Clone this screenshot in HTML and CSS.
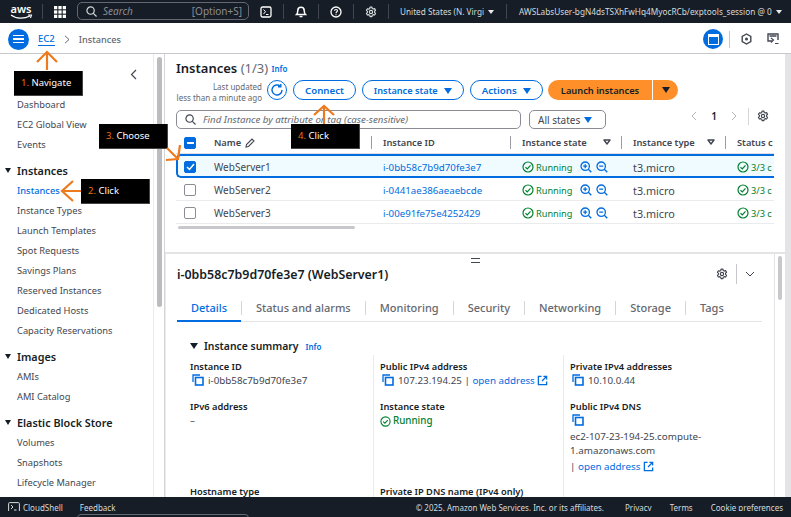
FILE: index.html
```html
<!DOCTYPE html>
<html lang="en">
  <head>
    <meta charset="UTF-8" />
    <title>Instances | EC2</title>
    <link rel="stylesheet" href="styles.css">
  </head>
  <body>
    <svg class="defs" width="0" height="0">
      <symbol id="gear" viewBox="0 0 16 16"><path d="M6.7 1.500h2.600l.4 1.900 1.300.7 1.800-.6 1.300 2.200-1.400 1.300v1.600l1.400 1.300-1.300 2.200-1.800-.6-1.300.7-.4 1.900H6.700l-.4-1.900-1.300-.7-1.800.6-1.300-2.200 1.400-1.300V7.100L1.900 5.800l1.300-2.200 1.800.6 1.300-.7z" fill="none" stroke="currentColor" stroke-width="1.500" stroke-linejoin="round"/><circle cx="8" cy="8" r="2.200" fill="none" stroke="currentColor" stroke-width="1.500"/></symbol>
      <symbol id="copy" viewBox="0 0 12 12"><path d="M1 8V1h7" fill="none" stroke="currentColor" stroke-width="1.300"/><rect x="3.500" y="3.500" width="7.500" height="7.500" fill="none" stroke="currentColor" stroke-width="1.600"/></symbol>
      <symbol id="ok" viewBox="0 0 12 12"><circle cx="6" cy="6" r="5" fill="none" stroke="currentColor" stroke-width="1.200"/><path d="M3.500 6.200l1.800 1.700 3.200-3.500" fill="none" stroke="currentColor" stroke-width="1.200"/></symbol>
      <symbol id="plus" viewBox="0 0 12 12"><circle cx="5.200" cy="5.200" r="4.200" fill="none" stroke="currentColor" stroke-width="1.300"/><path d="M8.300 8.300L11.300 11.300M3.200 5.200h4M5.200 3.200v4" fill="none" stroke="currentColor" stroke-width="1.300"/></symbol>
      <symbol id="minus" viewBox="0 0 12 12"><circle cx="5.200" cy="5.200" r="4.200" fill="none" stroke="currentColor" stroke-width="1.300"/><path d="M8.300 8.300L11.300 11.300M3.200 5.200h4" fill="none" stroke="currentColor" stroke-width="1.300"/></symbol>
      <symbol id="ext" viewBox="0 0 12 12"><path d="M5 1.500H1.500v9h9V7M7 1.500h3.500V5M10.300 1.700L5.500 6.500" fill="none" stroke="currentColor" stroke-width="1.400"/></symbol>
      <symbol id="sort" viewBox="0 0 8 6"><path d="M1 1h6L4 5z" fill="none" stroke="currentColor" stroke-width="1.400" stroke-linejoin="round"/></symbol>
    </svg>

    <header class="topnav">
      <div class="aws-logo">
        <span class="aws-word">aws</span>
        <svg width="23" height="6" viewBox="0 0 23 6"><path d="M1 1c5 4 13 4 19 1M18 1h3.500l-1 3" fill="none" stroke="#fff" stroke-width="1.100"/></svg>
      </div>
      <span class="nav-sep first"></span>
      <svg class="apps" width="12" height="12" viewBox="0 0 11 11" fill="#fff"><rect width="3" height="3"/><rect x="4" width="3" height="3"/><rect x="8" width="3" height="3"/><rect y="4" width="3" height="3"/><rect x="4" y="4" width="3" height="3"/><rect x="8" y="4" width="3" height="3"/><rect y="8" width="3" height="3"/><rect x="4" y="8" width="3" height="3"/><rect x="8" y="8" width="3" height="3"/></svg>
      <div class="nav-search">
        <svg width="11" height="11" viewBox="0 0 12 12"><circle cx="5" cy="5" r="4" fill="none" stroke="#d5dbdb" stroke-width="1.300"/><path d="M8 8l3.500 3.500" stroke="#d5dbdb" stroke-width="1.300"/></svg>
        <span class="search-word">Search</span>
        <span class="search-key">[Option+S]</span>
      </div>
      <svg class="nav-icon shell" width="12" height="12" viewBox="0 0 12 12"><rect x="1" y="1" width="10" height="10" rx="1.500" fill="none" stroke="#fff" stroke-width="1.300"/><path d="M3.500 3.500L5.500 5.700 3.500 8M6 8.500h2.500" fill="none" stroke="#fff" stroke-width="1"/></svg>
      <span class="nav-sep"></span>
      <svg class="nav-icon" width="12" height="13" viewBox="0 0 12 13"><path d="M1.500 9.500c1-1 1.300-2 1.300-4a3.200 3.200 0 0 1 6.400 0c0 2 .3 3 1.300 4z" fill="none" stroke="#fff" stroke-width="1.500"/><path d="M4.500 11.500h3" stroke="#fff" stroke-width="1.500"/></svg>
      <span class="nav-sep"></span>
      <svg class="nav-icon" width="12" height="12" viewBox="0 0 12 12"><circle cx="6" cy="6" r="5" fill="none" stroke="#fff" stroke-width="1.300"/><path d="M4.500 4.700C4.500 3 7.500 3 7.500 4.700 7.500 5.800 6 5.800 6 7.200M6 8.200v1" fill="none" stroke="#fff" stroke-width="1.100"/></svg>
      <span class="nav-sep"></span>
      <svg class="nav-icon gear-top" width="12" height="12"><use href="#gear"/></svg>
      <span class="nav-sep"></span>
      <span class="nav-region">United States (N. Virgi</span>
      <span class="caret white region-caret"></span>
      <span class="nav-sep region-sep"></span>
      <span class="nav-user">AWSLabsUser-bgN4dsTSXhFwHq4MyocRCb/exptools_session @ 0</span>
      <span class="caret white"></span>
    </header>

    <div class="crumbs">
      <button class="menu-btn" type="button"><span></span><span></span><span></span></button>
      <a class="crumb-link">EC2</a>
      <svg width="6" height="9" viewBox="0 0 6 9"><path d="M1 .8L5 4.500 1 8.200" fill="none" stroke="#656871" stroke-width="1"/></svg>
      <span class="crumb-here">Instances</span>
      <div class="crumb-tools">
        <span class="panel-btn"><span></span></span>
        <span class="tool-sep"></span>
        <svg class="hex" width="11" height="12" viewBox="0 0 11 12"><path d="M5.500 1l4.300 2.500v5L5.500 11 1.200 8.500v-5z" fill="none" stroke="#424650" stroke-width="1.400"/><circle cx="5.500" cy="6" r="1.500" fill="#424650"/></svg>
        <svg class="cast" width="12" height="12" viewBox="0 0 12 12"><path d="M5 8H1V1h10v6" fill="none" stroke="#424650" stroke-width="1.400"/><path d="M2.500 3h7" stroke="#424650" stroke-width="1.500"/><path d="M4 5l2.500 2L4 9.500M8 10.500h3.500" fill="none" stroke="#424650" stroke-width="1.200"/></svg>
      </div>
    </div>

    <div class="content">
      <nav class="sidebar">
        <div class="side-close"><svg width="7" height="11" viewBox="0 0 7 11"><path d="M6 1L1.500 5.500 6 10" fill="none" stroke="#424650" stroke-width="1.200"/></svg></div>
        <a class="side-item">Dashboard</a>
        <a class="side-item">EC2 Global View</a>
        <a class="side-item">Events</a>
        <h3 class="side-head">Instances</h3>
        <a class="side-item active">Instances</a>
        <a class="side-item">Instance Types</a>
        <a class="side-item">Launch Templates</a>
        <a class="side-item">Spot Requests</a>
        <a class="side-item">Savings Plans</a>
        <a class="side-item">Reserved Instances</a>
        <a class="side-item">Dedicated Hosts</a>
        <a class="side-item">Capacity Reservations</a>
        <h3 class="side-head">Images</h3>
        <a class="side-item">AMIs</a>
        <a class="side-item">AMI Catalog</a>
        <h3 class="side-head">Elastic Block Store</h3>
        <a class="side-item">Volumes</a>
        <a class="side-item">Snapshots</a>
        <a class="side-item">Lifecycle Manager</a>
      </nav>
      <div class="side-scroll"><span></span></div>

      <main class="main">
        <section class="list-panel">
          <div class="list-top">
            <div class="list-title">
              <h1>Instances <span class="count">(1/3)</span> <a class="info">Info</a></h1>
              <div class="updated">Last updated<br />less than a minute ago</div>
            </div>
            <button class="refresh" type="button">
              <svg width="14" height="14" viewBox="0 0 14 14"><path d="M12 7a5 5 0 1 1-1.700-3.800" fill="none" stroke="#006ce0" stroke-width="1.400"/><path d="M10.800 1v2.800H8" fill="none" stroke="#006ce0" stroke-width="1.400"/></svg>
            </button>
            <button class="pill connect" type="button">Connect</button>
            <button class="pill state" type="button">Instance state <span class="caret blue"></span></button>
            <button class="pill actions" type="button">Actions <span class="caret blue"></span></button>
            <div class="launch">
              <span class="launch-main">Launch instances</span>
              <span class="launch-drop"><span class="caret dark"></span></span>
            </div>
          </div>

          <div class="filter-row">
            <div class="filter-box">
              <svg width="11" height="11" viewBox="0 0 12 12"><circle cx="5" cy="5" r="4" fill="none" stroke="#424650" stroke-width="1.300"/><path d="M8 8l3.500 3.500" stroke="#424650" stroke-width="1.300"/></svg>
              <span>Find Instance by attribute or tag (case-sensitive)</span>
            </div>
            <div class="state-select">All states <span class="caret blue"></span></div>
            <div class="pager">
              <svg width="6" height="10" viewBox="0 0 6 10"><path d="M5 1L1 5l4 4" fill="none" stroke="#b4b4bb" stroke-width="1"/></svg>
              <span class="page-num">1</span>
              <svg width="6" height="10" viewBox="0 0 6 10"><path d="M1 1l4 4-4 4" fill="none" stroke="#b4b4bb" stroke-width="1"/></svg>
              <span class="pager-sep"></span>
              <svg class="pager-gear" width="12" height="12"><use href="#gear"/></svg>
            </div>
          </div>

          <div class="table">
            <div class="row head">
              <span class="cell-check"><span class="check on"><span class="dash"></span></span></span>
              <span class="cell name">Name
                <svg width="10" height="10" viewBox="0 0 10 10"><path d="M1 9l.5-2.500L7 1l2 2-5.500 5.500z" fill="none" stroke="#424650" stroke-width="1.100"/></svg>
              </span>
              <span class="cell id"><i class="col-sep"></i>Instance ID</span>
              <span class="cell st"><i class="col-sep"></i>Instance state<svg class="sort" width="8" height="6"><use href="#sort"/></svg></span>
              <span class="cell ty"><i class="col-sep"></i>Instance type<svg class="sort" width="8" height="6"><use href="#sort"/></svg></span>
              <span class="cell ck"><i class="col-sep"></i>Status c</span>
            </div>
            <div class="row selected">
              <span class="cell-check"><span class="check on"><svg width="9" height="8" viewBox="0 0 9 8"><path d="M1 4l2.500 2.500L8 1" fill="none" stroke="#fff" stroke-width="1.500"/></svg></span></span>
              <span class="cell name">WebServer1</span>
              <a class="cell id">i-0bb58c7b9d70fe3e7</a>
              <span class="cell st"><span class="running"><svg width="12" height="12"><use href="#ok"/></svg>Running</span><svg class="zoom" width="12" height="12"><use href="#plus"/></svg><svg class="zoom" width="12" height="12"><use href="#minus"/></svg></span>
              <span class="cell ty">t3.micro</span>
              <span class="cell ck"><span class="running"><svg width="12" height="12"><use href="#ok"/></svg>3/3 c</span></span>
            </div>
            <div class="row">
              <span class="cell-check"><span class="check"></span></span>
              <span class="cell name">WebServer2</span>
              <a class="cell id">i-0441ae386aeaebcde</a>
              <span class="cell st"><span class="running"><svg width="12" height="12"><use href="#ok"/></svg>Running</span><svg class="zoom" width="12" height="12"><use href="#plus"/></svg><svg class="zoom" width="12" height="12"><use href="#minus"/></svg></span>
              <span class="cell ty">t3.micro</span>
              <span class="cell ck"><span class="running"><svg width="12" height="12"><use href="#ok"/></svg>3/3 c</span></span>
            </div>
            <div class="row">
              <span class="cell-check"><span class="check"></span></span>
              <span class="cell name">WebServer3</span>
              <a class="cell id">i-00e91fe75e4252429</a>
              <span class="cell st"><span class="running"><svg width="12" height="12"><use href="#ok"/></svg>Running</span><svg class="zoom" width="12" height="12"><use href="#plus"/></svg><svg class="zoom" width="12" height="12"><use href="#minus"/></svg></span>
              <span class="cell ty">t3.micro</span>
              <span class="cell ck"><span class="running"><svg width="12" height="12"><use href="#ok"/></svg>3/3 c</span></span>
            </div>
          </div>
          <div class="h-scroll"><span></span></div>
        </section>

        <section class="detail-panel">
          <div class="detail-body">
            <div class="drag-handle"></div>
            <div class="detail-head">
              <h2>i-0bb58c7b9d70fe3e7 (WebServer1)</h2>
              <svg class="detail-gear" width="12" height="12"><use href="#gear"/></svg>
              <span class="tool-sep short"></span>
              <svg width="10" height="6" viewBox="0 0 10 6"><path d="M1 1l4 4 4-4" fill="none" stroke="#424650" stroke-width="1"/></svg>
            </div>
            <div class="tabs">
              <a class="tab active">Details</a>
              <a class="tab">Status and alarms</a>
              <a class="tab">Monitoring</a>
              <a class="tab">Security</a>
              <a class="tab">Networking</a>
              <a class="tab">Storage</a>
              <a class="tab">Tags</a>
            </div>
            <h4 class="summary"><span class="caret dark"></span>Instance summary <a class="info">Info</a></h4>
            <div class="fields">
              <div class="field top">
                <b>Instance ID</b>
                <p><svg class="copy" width="12" height="12"><use href="#copy"/></svg>i-0bb58c7b9d70fe3e7</p>
              </div>
              <div class="field top ruled">
                <b>Public IPv4 address</b>
                <p><svg class="copy" width="12" height="12"><use href="#copy"/></svg>107.23.194.25 | <a>open address <svg width="11" height="11"><use href="#ext"/></svg></a></p>
              </div>
              <div class="field top ruled">
                <b>Private IPv4 addresses</b>
                <p><svg class="copy" width="12" height="12"><use href="#copy"/></svg>10.10.0.44</p>
              </div>
              <div class="field">
                <b>IPv6 address</b>
                <p>–</p>
              </div>
              <div class="field ruled">
                <b>Instance state</b>
                <p class="running"><svg width="11" height="11"><use href="#ok"/></svg>Running</p>
              </div>
              <div class="field ruled">
                <b>Public IPv4 DNS</b>
                <p><svg class="copy" width="12" height="12"><use href="#copy"/></svg></p>
                <p class="dns">ec2-107-23-194-25.compute-<br />1.amazonaws.com</p>
                <p class="dns-link">| <a>open address <svg width="11" height="11"><use href="#ext"/></svg></a></p>
              </div>
              <div class="field">
                <b>Hostname type</b>
              </div>
              <div class="field ruled">
                <b>Private IP DNS name (IPv4 only)</b>
              </div>
              <div class="field ruled"></div>
            </div>
          </div>
          <div class="detail-scroll"><span></span></div>
        </section>
      </main>
      <div class="main-scroll"></div>
    </div>

    <footer class="footer">
      <div class="foot-line">
        <svg width="12" height="11" viewBox="0 0 12 11"><rect x=".6" y=".6" width="10.800" height="9.800" rx="1" fill="none" stroke="#d5dbdb"/><path d="M3 3l2 2-2 2M6 8h2.500" fill="none" stroke="#d5dbdb"/></svg>
        <span class="foot-shell">CloudShell</span>
        <span class="foot-feedback">Feedback</span>
        <span class="foot-copy">© 2025, Amazon Web Services, Inc. or its affiliates.</span>
        <span class="foot-link">Privacy</span>
        <span class="foot-link">Terms</span>
        <span class="foot-link">Cookie preferences</span>
      </div>
      <div class="foot-edge"><span></span></div>
    </footer>

    <!-- tutorial callouts drawn over the console -->
    <div class="callout c1"><em>1.</em> Navigate</div>
    <div class="callout c2"><em>2.</em> Click</div>
    <div class="callout c3"><em>3.</em> Choose</div>
    <div class="callout c4"><em>4.</em> Click</div>
    <svg class="arrows" width="791" height="517" viewBox="0 0 791 517">
      <g fill="none" stroke="#ee7a1e" stroke-width="2.200">
        <path d="M47 70V53M37 62l10-10 10 10" />
        <path d="M81 191H63M73 181l-11 10 11 10" />
        <path d="M324 124V107M314 115l10-9 10 9" />
        <path d="M167 148l11 11M180 145l-2 14-12 1" />
      </g>
    </svg>
  </body>
</html>
```

FILE: styles.css
```css
* {
  box-sizing: border-box;
}
html,
body {
  margin: 0;
  height: 100%;
}
body {
  position: relative;
  width: 791px;
  height: 517px;
  overflow: hidden;
  display: flex;
  flex-direction: column;
  background: #fff;
  color: #424650;
  font-family: "Noto Sans", "Open Sans", sans-serif;
  font-size: 10px;
}
a {
  color: #006ce0;
}
h1,
h2,
h3,
h4,
p {
  margin: 0;
}
button {
  font-family: inherit;
}
.defs {
  position: absolute;
}

.caret {
  display: inline-block;
  width: 0;
  height: 0;
  border-left: 4px solid transparent;
  border-right: 4px solid transparent;
  border-top: 6px solid #424650;
}
.caret.blue {
  border-top-color: #006ce0;
  margin-left: 4px;
}
.caret.dark {
  border-top-color: #161d26;
}
.caret.white {
  border-left-width: 3px;
  border-right-width: 3px;
  border-top: 4px solid #e9ebed;
}

/* top bar */
.topnav {
  flex: none;
  height: 23px;
  background: #161d26;
  display: flex;
  align-items: center;
  color: #d5dbdb;
  padding-left: 9px;
}
.aws-logo {
  width: 24px;
  height: 18px;
  display: flex;
  flex-direction: column;
  align-items: center;
  color: #fff;
}
.aws-word {
  font-size: 11px;
  line-height: 12px;
  font-weight: 600;
}
.aws-logo svg {
  margin-top: -1px;
}
.nav-sep {
  width: 1px;
  height: 15px;
  background: #424650;
  margin: 0 11px;
}
.nav-sep.first {
  margin: 0 11px 0 9px;
}
.nav-search {
  width: 172px;
  height: 18px;
  margin: -1px 0 0 11px;
  border: 1px solid #656871;
  border-radius: 5px;
  display: flex;
  align-items: center;
  gap: 6px;
  padding: 0 6px 0 8px;
  font-size: 10px;
  color: #8c8c94;
}
.search-word {
  font-style: italic;
}
.search-key {
  margin-left: auto;
}
.nav-icon.shell {
  margin-left: 11px;
}
.nav-region {
  font-size: 8.200px;
  white-space: nowrap;
}
.region-caret {
  margin-left: 4px;
}
.nav-sep.region-sep {
  margin: 0 12px;
}
.nav-user {
  font-size: 8.250px;
  white-space: nowrap;
  margin-right: 4px;
}

/* breadcrumb row */
.crumbs {
  flex: none;
  height: 31px;
  border-bottom: 1px solid #c6c6cd;
  display: flex;
  align-items: center;
  padding: 2px 12px 0 8px;
  gap: 9px;
}
.menu-btn {
  width: 21px;
  height: 21px;
  border: 0;
  border-radius: 50%;
  background: #006ce0;
  display: flex;
  flex-direction: column;
  align-items: center;
  justify-content: center;
  gap: 2px;
  padding: 0;
}
.menu-btn span {
  width: 11px;
  height: 1.5px;
  background: #fff;
}
.crumb-link {
  border-bottom: 1px solid #006ce0;
  font-size: 9.500px;
  font-weight: 500;
  line-height: 13px;
}
.crumb-here {
  font-size: 9.200px;
  font-weight: 500;
  color: #656871;
}
.crumb-tools {
  margin-left: auto;
  display: flex;
  align-items: center;
}
.panel-btn {
  width: 20px;
  height: 20px;
  border-radius: 50%;
  background: #006ce0;
  display: flex;
  align-items: center;
  justify-content: center;
}
.panel-btn span {
  width: 11px;
  height: 11px;
  border: 1.500px solid #fff;
  border-top-width: 3px;
}
.tool-sep {
  width: 1px;
  height: 17px;
  background: #c6c6cd;
  margin-left: 6px;
}
.hex {
  margin-left: 11px;
}
.cast {
  margin-left: 15px;
}
.tool-sep.short {
  height: 20px;
  margin: 0 8px;
}

.content {
  flex: 1;
  min-height: 0;
  display: flex;
}

/* left nav */
.sidebar {
  width: 153px;
  flex: none;
  padding: 14px 0 0 17px;
  overflow: hidden;
}
.side-close {
  height: 27px;
  padding: 1px 0 0 113px;
}
.side-item {
  display: block;
  height: 20px;
  line-height: 20px;
  font-size: 9.300px;
  color: #424650;
  white-space: nowrap;
}
.side-item.active {
  color: #006ce0;
  font-weight: 500;
}
.side-head {
  position: relative;
  height: 26px;
  line-height: 32px;
  font-size: 10.800px;
  font-weight: 600;
  color: #161d26;
  margin: 0;
}
.side-head::before {
  content: "";
  position: absolute;
  left: -12px;
  top: 13px;
  border-left: 3.500px solid transparent;
  border-right: 3.500px solid transparent;
  border-top: 5px solid #161d26;
}
.side-scroll {
  width: 12px;
  flex: none;
  border-left: 1px solid #e9ebed;
  border-right: 1px solid #d5d5d8;
  padding: 3px 2.500px;
}
.side-scroll span {
  display: block;
  height: 250px;
  border-radius: 3px;
  background: #bcbcc0;
}

/* main column */
.main {
  flex: 1;
  min-width: 0;
  display: flex;
  flex-direction: column;
  overflow: hidden;
}
.main-scroll {
  width: 6px;
  flex: none;
  background: #e4e4e6;
}
.list-panel {
  flex: none;
  height: 200px;
  border-bottom: 2px solid #e4e4e6;
  padding-top: 5px;
  overflow: hidden;
}
.list-top {
  display: flex;
  align-items: flex-end;
  padding-left: 11px;
}
.list-title {
  width: 86px;
}
.list-title h1 {
  font-size: 13px;
  line-height: 19px;
  font-weight: 600;
  color: #161d26;
  white-space: nowrap;
}
.count {
  font-weight: 400;
  color: #656871;
}
.info {
  font-size: 8px;
  font-weight: 600;
  vertical-align: 1px;
}
.updated {
  font-size: 8px;
  line-height: 11px;
  text-align: right;
  color: #656871;
  margin-top: 3px;
  white-space: nowrap;
}
.refresh {
  width: 20px;
  height: 20px;
  border: 1.500px solid #006ce0;
  border-radius: 50%;
  background: #fff;
  margin: 0 6px 3px 5px;
  padding: 0;
  display: flex;
  align-items: center;
  justify-content: center;
}
.pill {
  height: 20px;
  border: 1.500px solid #006ce0;
  border-radius: 10px;
  background: #fff;
  color: #006ce0;
  font-size: 9.700px;
  font-weight: 600;
  padding: 0;
  margin: 0 6px 3px 0;
  white-space: nowrap;
}
.pill.connect {
  width: 63px;
}
.pill.state {
  width: 102px;
  font-size: 9.200px;
}
.pill.actions {
  width: 73px;
  margin-right: 5px;
}
.launch {
  display: flex;
  height: 20px;
  margin-bottom: 3px;
  color: #161d26;
  font-size: 9.300px;
  font-weight: 600;
}
.launch-main {
  width: 104px;
  background: #ff9029;
  border-radius: 10px 0 0 10px;
  display: flex;
  align-items: center;
  justify-content: center;
}
.launch-drop {
  width: 25px;
  margin-left: 1px;
  background: #ff9029;
  border-radius: 0 10px 10px 0;
  display: flex;
  align-items: center;
  justify-content: center;
}
.filter-row {
  display: flex;
  align-items: center;
  padding-left: 11px;
  margin-top: 7px;
}
.filter-box {
  width: 345px;
  height: 19px;
  border: 1.500px solid #8c8c94;
  border-radius: 5px;
  display: flex;
  align-items: center;
  gap: 7px;
  padding-left: 8px;
  color: #656871;
  font-size: 9.700px;
  font-style: italic;
  white-space: nowrap;
}
.state-select {
  width: 77px;
  height: 19px;
  margin-left: 8px;
  border: 1.500px solid #8c8c94;
  border-radius: 5px;
  display: flex;
  align-items: center;
  padding-left: 8px;
  white-space: nowrap;
}
.pager {
  margin-left: auto;
  margin-right: 16px;
  display: flex;
  align-items: center;
  margin-top: -7px;
}
.page-num {
  margin: 0 14px;
  font-weight: 600;
  color: #161d26;
}
.pager-sep {
  width: 1px;
  height: 17px;
  background: #d5d5d8;
  margin: 0 8px 0 11px;
}
.pager-gear {
  color: #424650;
}

/* table */
.table {
  margin: 3px 11px 0 11px;
  overflow: hidden;
}
.row {
  height: 23px;
  padding-top: 2px;
  display: grid;
  grid-template-columns: 27px 168px 139px 111px 104px 48px;
  align-items: center;
  border-bottom: 1px solid #e9ebed;
  white-space: nowrap;
  overflow: hidden;
  color: #424650;
}
.row.head {
  height: 22px;
  padding-top: 0;
  font-size: 9.300px;
  font-weight: 600;
  border-bottom: 1px solid #dedee3;
  color: #424650;
}
.row.selected {
  height: 24px;
  padding-top: 2px;
  background: #f0fbff;
  border: 2px solid #006ce0;
  border-right: 0;
  border-radius: 5px 0 0 5px;
  grid-template-columns: 25px 168px 139px 111px 104px 48px;
}
.row > .cell-check {
  padding-left: 8px;
  display: flex;
}
.row.selected > .cell-check {
  padding-left: 6px;
}
.check {
  width: 12px;
  height: 12px;
  border: 1.500px solid #8c8c94;
  border-radius: 2px;
  display: flex;
  align-items: center;
  justify-content: center;
}
.check.on {
  background: #006ce0;
  border-color: #006ce0;
}
.dash {
  width: 7px;
  height: 2px;
  background: #fff;
}
.cell {
  position: relative;
  display: flex;
  align-items: center;
  gap: 4px;
  padding-left: 12px;
  text-decoration: none;
  overflow: hidden;
}
.cell.name {
  padding-left: 11px;
}
a.cell {
  color: #006ce0;
  font-size: 9.700px;
}
.row:not(.head) .ty {
  font-size: 10.800px;
}
.col-sep {
  position: absolute;
  left: 0;
  top: 0;
  width: 1px;
  height: 13px;
  background: #9b9ba3;
}
.sort {
  position: absolute;
  right: 10px;
  top: 3px;
  color: #424650;
}
.running {
  color: #00802f;
  font-size: 9.200px;
  display: inline-flex;
  align-items: center;
  gap: 2px;
}
.st .running {
  margin-right: 4px;
}
.zoom {
  color: #006ce0;
  flex: none;
}
.h-scroll {
  margin: 2px 0 0 13px;
}
.h-scroll span {
  display: block;
  width: 177px;
  height: 3px;
  background: #c8c8cc;
  border-radius: 2px;
}

/* split details */
.detail-panel {
  flex: 1;
  min-height: 0;
  display: flex;
  overflow: hidden;
}
.detail-body {
  position: relative;
  flex: 1;
  min-width: 0;
  padding: 10px 0 0 11px;
  border-left: 1px solid #e9ebed;
}
.drag-handle {
  position: absolute;
  left: 305px;
  top: 4px;
  width: 9px;
  height: 5px;
  border-top: 1.500px solid #424650;
  border-bottom: 1.500px solid #424650;
}
.detail-head {
  display: flex;
  align-items: center;
  padding-right: 19px;
  height: 20px;
}
.detail-head h2 {
  font-size: 12.400px;
  font-weight: 600;
  color: #161d26;
  margin-right: auto;
}
.detail-gear {
  color: #424650;
}
.tabs {
  display: flex;
  width: 585px;
  height: 21px;
  margin-top: 17px;
  border-bottom: 1.500px solid #e4e4e6;
  align-items: flex-start;
}
.tab {
  height: 14px;
  line-height: 14px;
  padding: 0 14px;
  font-size: 11px;
  font-weight: 500;
  color: #656871;
  white-space: nowrap;
  border-left: 1px solid #d5d5d8;
}
.tab.active {
  color: #006ce0;
  width: 64px;
  height: 21px;
  padding: 0 0 0 14px;
  border-left: 0;
  border-bottom: 2px solid #006ce0;
}
.summary {
  display: flex;
  align-items: center;
  gap: 6px;
  margin: 16px 0 0 13px;
  font-size: 10.400px;
  font-weight: 600;
  color: #161d26;
  height: 16px;
}
.summary .info {
  margin-left: 1px;
}
.fields {
  display: grid;
  grid-template-columns: 183px 190px 200px;
  grid-template-rows: 45px 85px 40px;
  margin: 1px 0 0 13px;
  width: 590px;
}
.field {
  padding-right: 4px;
  color: #424650;
  line-height: 14px;
  font-size: 9.800px;
}
.field.top {
  padding-top: 5px;
}
.field.ruled {
  border-left: 1.500px solid #e9ebed;
  padding-left: 6px;
}
.field b {
  display: block;
  font-weight: 600;
  color: #161d26;
  font-size: 9.300px;
}
.field p {
  display: block;
  white-space: nowrap;
}
.field p.running {
  display: flex;
  font-size: 9.800px;
  color: #00802f;
  font-weight: 500;
}
.field p.dns {
  margin-top: 2px;
}
.field p.dns-link {
  margin-top: 2px;
}
.field a svg {
  vertical-align: -2px;
}
.copy {
  color: #006ce0;
  margin: 0 4px 0 2px;
  vertical-align: -2px;
}
.detail-scroll {
  width: 11px;
  flex: none;
  border-left: 1px solid #e4e4e6;
  padding: 2px 3px;
}
.detail-scroll span {
  display: block;
  height: 44px;
  border-radius: 3px;
  background: #c8c8cc;
}

/* bottom bar */
.footer {
  flex: none;
  height: 20px;
  background: #161d26;
  color: #d5dbdb;
  font-size: 8px;
  white-space: nowrap;
}
.foot-line {
  height: 14px;
  overflow: hidden;
  display: flex;
  align-items: flex-start;
  padding: 5px 8px 0 8px;
  line-height: 12px;
}
.foot-shell {
  margin-left: 3px;
}
.foot-feedback {
  margin-left: 17px;
}
.foot-copy {
  margin-left: auto;
  margin-right: 3px;
}
.foot-link {
  margin-left: 18px;
}
.foot-edge {
  height: 6px;
  padding: 3px 0 0 77px;
  overflow: hidden;
}
.foot-edge span {
  display: block;
  width: 172px;
  height: 8px;
  border: 1px solid #656871;
  border-radius: 5px;
}

/* tutorial callouts */
.callout {
  position: absolute;
  height: 25px;
  width: 69px;
  background: #000;
  color: #fff;
  font-size: 9.500px;
  line-height: 24px;
  padding-left: 7px;
  border: 1px solid #444;
  border-top: 0;
  border-left: 0;
}
.callout em {
  font-style: normal;
  color: #ec7211;
}
.c1 {
  left: 14px;
  top: 71px;
}
.c2 {
  left: 81px;
  top: 179px;
}
.c3 {
  left: 99px;
  top: 124px;
}
.c4 {
  left: 291px;
  top: 124px;
}
.arrows {
  position: absolute;
  left: 0;
  top: 0;
  pointer-events: none;
}
```
